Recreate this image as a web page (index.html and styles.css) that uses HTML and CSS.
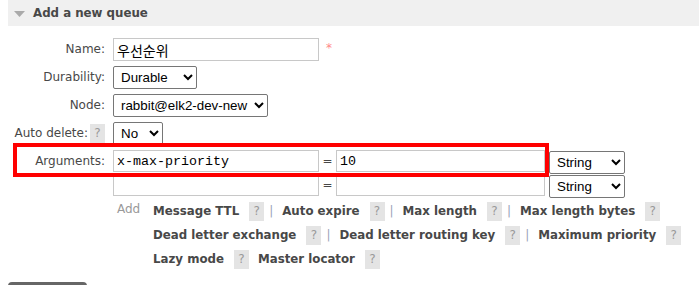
FILE: index.html
```html
<!DOCTYPE html>
<html>
<head>
<meta charset="utf-8">
<link rel="stylesheet" href="styles.css">
</head>
<body>
<div class="section">
  <h2 class="sec-title"><svg class="tri" width="11" height="6" viewBox="0 0 11 6"><polygon points="0,0 11,0 5.5,6" fill="#aaa"/></svg>Add a new queue</h2>
  <div class="form">
    <div class="row">
      <label class="lbl">Name:</label>
      <div class="field"><input class="txt name" type="text" value="우선순위"><span class="req">*</span></div>
    </div>
    <div class="row">
      <label class="lbl">Durability:</label>
      <div class="field"><select class="sel dur"><option>Durable</option></select></div>
    </div>
    <div class="row">
      <label class="lbl">Node:</label>
      <div class="field"><select class="sel node"><option>rabbit@elk2-dev-new</option></select></div>
    </div>
    <div class="row">
      <label class="lbl">Auto delete:<span class="help hl">?</span></label>
      <div class="field"><select class="sel no"><option>No</option></select></div>
    </div>
    <div class="row args">
      <label class="lbl">Arguments:</label>
      <div class="field col">
        <div class="mrow"><input class="txt mono key" type="text" value="x-max-priority"><span class="eq">=</span><input class="txt mono val" type="text" value="10"><select class="sel type"><option>String</option></select></div>
        <div class="mrow"><input class="txt mono key" type="text" value=""><span class="eq">=</span><input class="txt mono val" type="text" value=""><select class="sel type"><option>String</option></select></div>
        <div class="addrow">
          <span class="add">Add</span>
          <div class="links">
            <div class="line"><span class="alink">Message TTL</span><span class="help">?</span><span class="sep">|</span><span class="alink">Auto expire</span><span class="help">?</span><span class="sep">|</span><span class="alink">Max length</span><span class="help">?</span><span class="sep">|</span><span class="alink">Max length bytes</span><span class="help">?</span></div>
            <div class="line"><span class="alink">Dead letter exchange</span><span class="help">?</span><span class="sep">|</span><span class="alink">Dead letter routing key</span><span class="help">?</span><span class="sep">|</span><span class="alink">Maximum priority</span><span class="help">?</span></div>
            <div class="line"><span class="alink">Lazy mode</span><span class="help gap">?</span><span class="alink">Master locator</span><span class="help">?</span></div>
          </div>
        </div>
      </div>
    </div>
    <div class="highlight"></div>
  </div>
  <button class="submit" aria-label="Add queue"></button>
</div>
</body>
</html>
```
FILE: styles.css
```css
html, body {
  margin: 0;
  padding: 0;
  background: #fff;
}
body {
  margin-left: 8px;
  font-family: "DejaVu Sans", Verdana, sans-serif;
  font-size: 12px;
  color: #484848;
}
.sec-title {
  margin: 0;
  height: 26px;
  background: #f0f0f0;
  display: flex;
  align-items: center;
  font-size: 11.8px;
  font-weight: bold;
  color: #484848;
  padding-left: 6px;
}
.tri {
  margin-right: 8px;
  margin-top: 1px;
}
.form {
  position: relative;
  margin-top: 12px;
  display: flex;
  flex-direction: column;
  gap: 5px;
}
.row {
  display: flex;
  gap: 8px;
}
.lbl {
  width: 97px;
  flex: none;
  text-align: right;
  line-height: 23px;
  height: 23px;
  white-space: nowrap;
  display: flex;
  justify-content: flex-end;
  align-items: center;
}
.field {
  display: flex;
  align-items: flex-start;
}
.field.col {
  flex-direction: column;
  align-items: stretch;
}
.txt {
  box-sizing: border-box;
  height: 23px;
  border: 1px solid #c8c8c8;
  padding: 0 3px;
  margin: 0;
  font-family: "Noto Sans CJK KR", "Liberation Sans", sans-serif;
  font-size: 13.33px;
  color: #000;
  background: #fff;
  outline: none;
}
.name {
  width: 206px;
  font-size: 14px;
}
.mono {
  font-family: "Liberation Mono", monospace;
  font-size: 13.33px;
  height: 22px;
}
.req {
  color: #f88;
  margin-left: 7px;
  font-size: 12px;
  line-height: 14px;
  margin-top: 3px;
}
.sel {
  box-sizing: border-box;
  height: 23px;
  margin: 0;
  font-family: "Liberation Sans", Arial, sans-serif;
  font-size: 13.33px;
  color: #000;
  border: 1px solid #767676;
  border-radius: 2px;
  background: #fff;
  padding: 0 0 0 3px;
}
.dur { width: 84px; }
.node { width: 155px; }
.no { width: 50px; }
.type { width: 76px; margin-left: 4px; margin-top: 1px; }
.help {
  display: inline-block;
  width: 15px;
  height: 19px;
  line-height: 19px;
  text-align: center;
  background: #e4e4e4;
  color: #999;
  font-weight: normal;
  font-size: 12px;
}
.hl {
  margin-left: 2px;
}
.mrow {
  display: flex;
  align-items: flex-start;
}
.key { width: 206px; }
.val { width: 209px; }
.eq {
  width: 17px;
  text-align: center;
  line-height: 22px;
}
.addrow {
  display: flex;
  margin-top: 1px;
}
.add {
  width: 36px;
  padding-left: 4px;
  color: #999;
  line-height: 16px;
  padding-top: 2px;
}
.links {
  display: flex;
  flex-direction: column;
}
.line {
  height: 24px;
  display: flex;
  align-items: center;
  white-space: nowrap;
}
.alink {
  font-weight: bold;
  font-size: 11.8px;
  color: #484848;
  margin-right: 10px;
}
.sep {
  color: #9aa4b8;
  margin: 0 9px 0 5px;
}
.help.gap {
  margin-right: 9px;
}
.highlight {
  position: absolute;
  left: 5px;
  top: 105px;
  width: 528px;
  height: 26px;
  border: 4px solid #f00;
  pointer-events: none;
}
.submit {
  display: block;
  margin-top: 11px;
  width: 79px;
  height: 26px;
  border: none;
  border-radius: 4px;
  background: #666;
  padding: 0;
}
```
